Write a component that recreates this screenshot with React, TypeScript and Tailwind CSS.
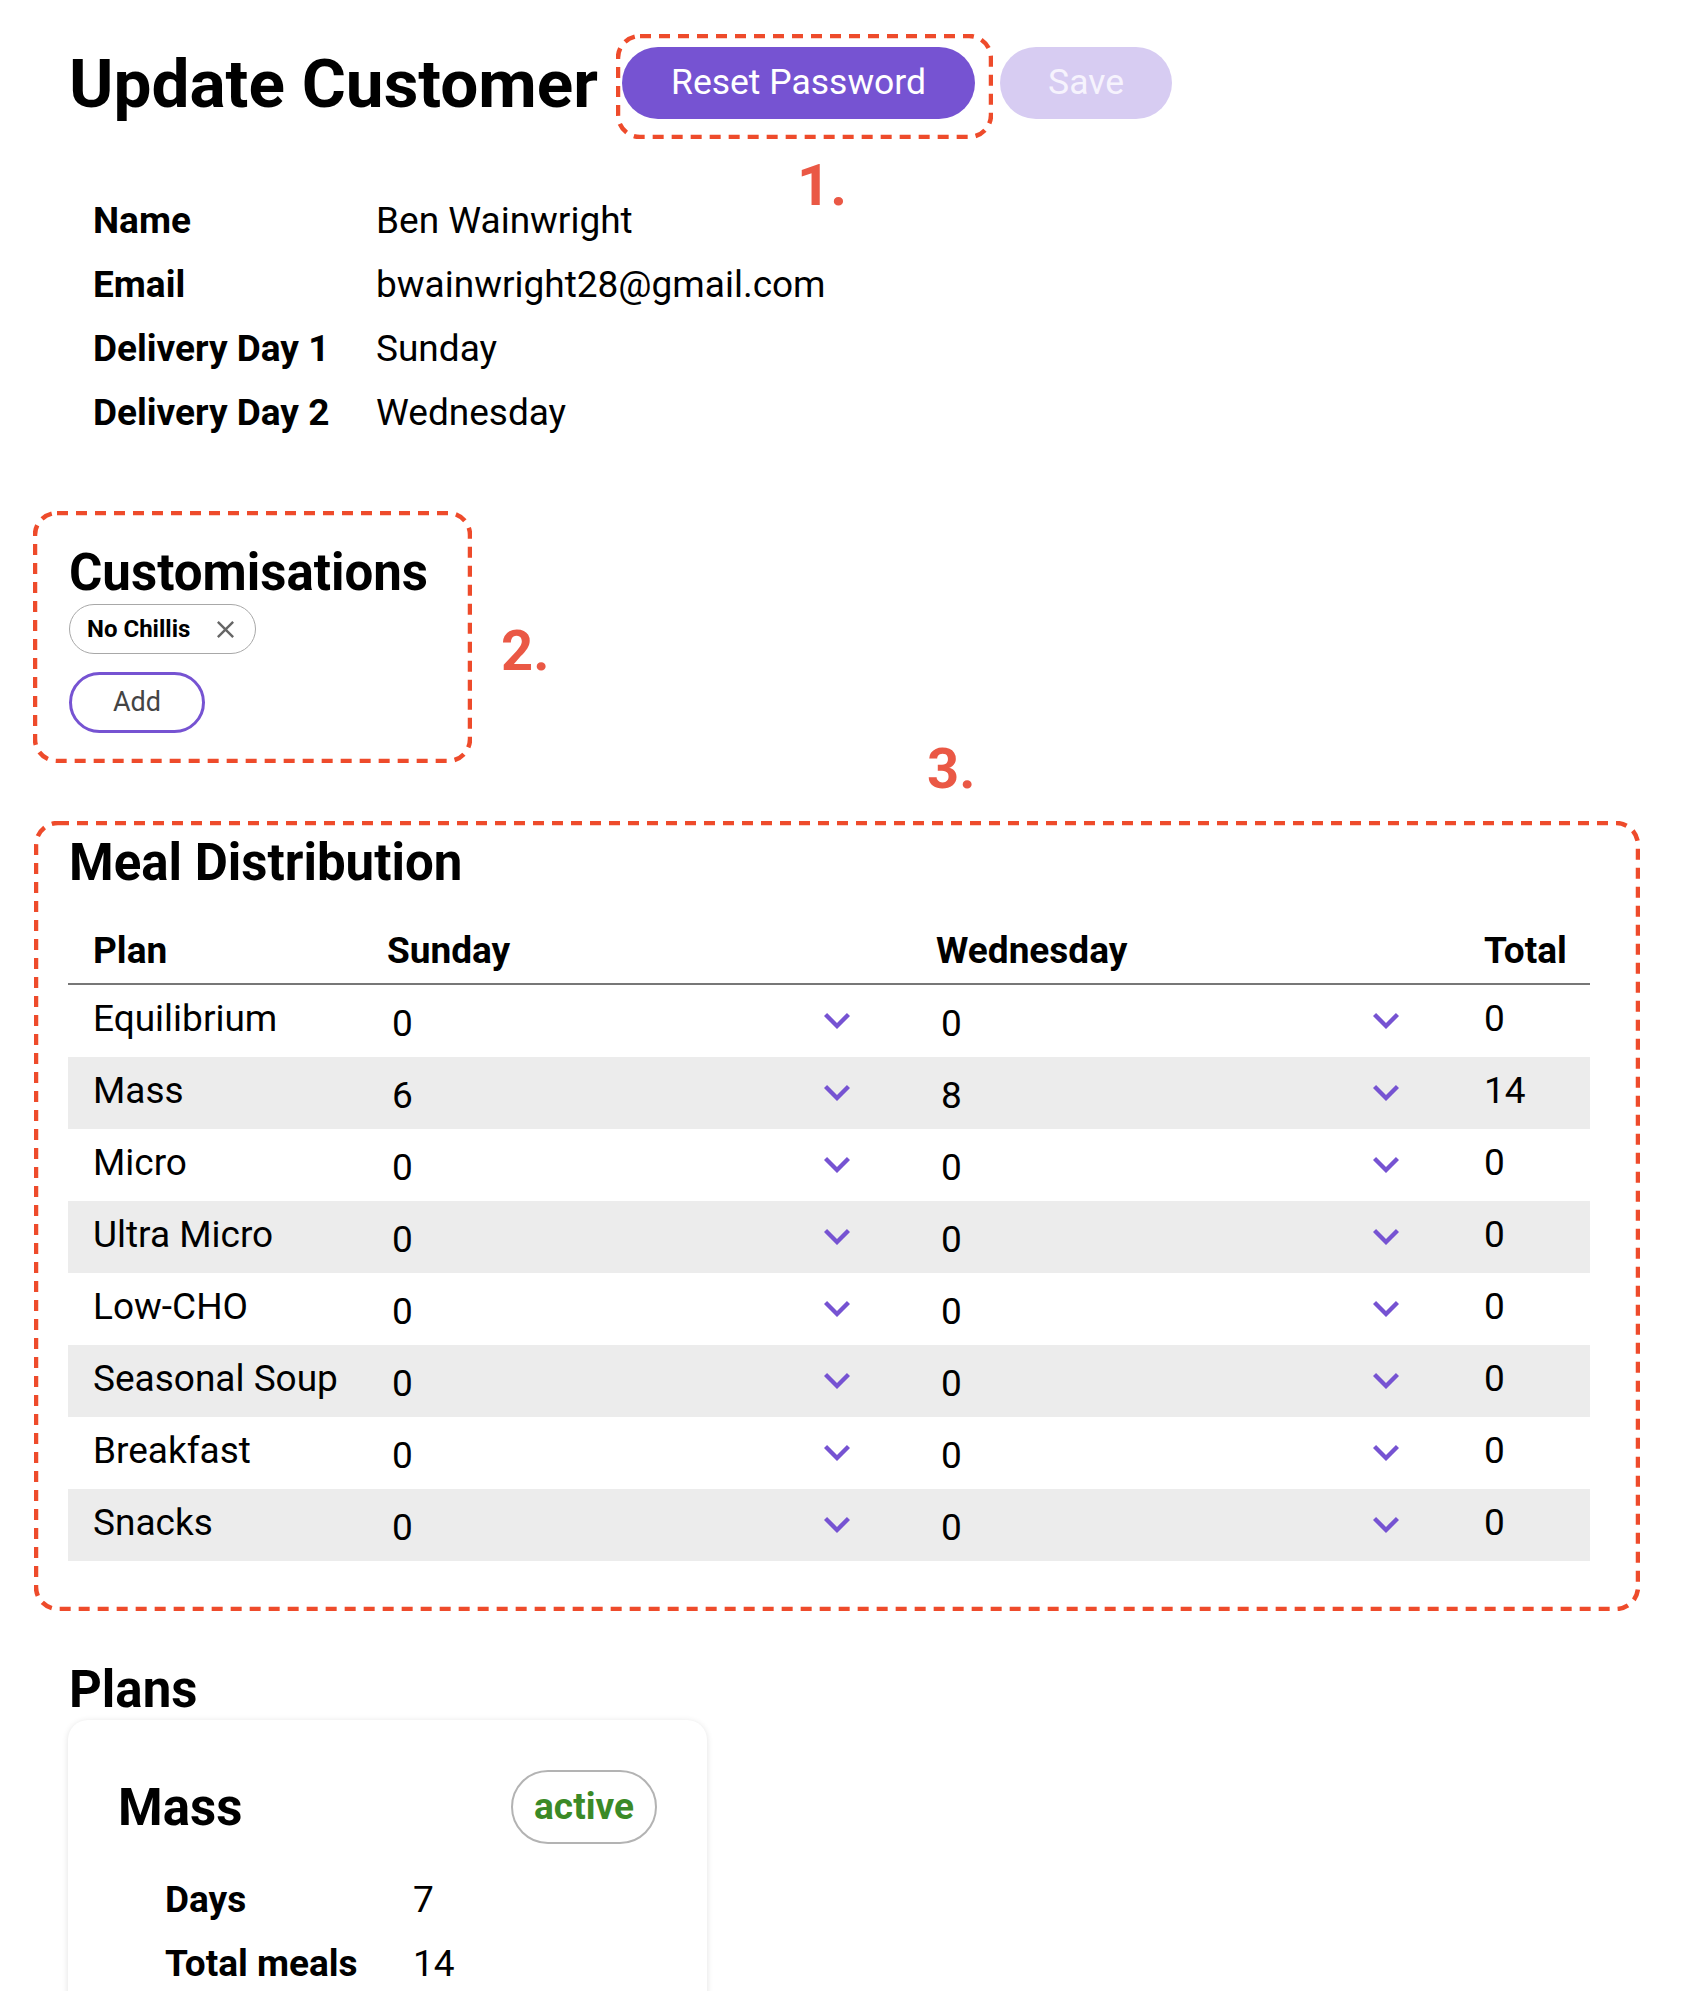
import React from "react";

const ROWS: [string, number, number][] = [
  ["Equilibrium", 0, 0],
  ["Mass", 6, 8],
  ["Micro", 0, 0],
  ["Ultra Micro", 0, 0],
  ["Low-CHO", 0, 0],
  ["Seasonal Soup", 0, 0],
  ["Breakfast", 0, 0],
  ["Snacks", 0, 0],
];

function ChevronDown() {
  return (
    <svg
      width="26"
      height="16"
      viewBox="6 8.59 12 7.41"
      preserveAspectRatio="none"
      fill="#7653d2"
    >
      <path d="M16.59 8.59L12 13.17 7.41 8.59 6 10l6 6 6-6z" />
    </svg>
  );
}

function CloseIcon() {
  return (
    <svg width="17" height="17" viewBox="5 5 14 14" fill="#666666">
      <path d="M19 6.41L17.59 5 12 10.59 6.41 5 5 6.41 10.59 12 5 17.59 6.41 19 12 13.41 17.59 19 19 17.59 13.41 12z" />
    </svg>
  );
}

// hand-drawn style annotation frame
function DashedFrame({ w, h }: { w: number; h: number }) {
  return (
    <svg width={w} height={h} className="block">
      <rect
        x="2"
        y="2"
        width={w - 4}
        height={h - 4}
        rx="22"
        fill="none"
        stroke="#ee4b2b"
        strokeWidth="4.5"
        strokeDasharray="11 8"
      />
    </svg>
  );
}

function SelectCell({ value }: { value: number }) {
  return (
    <div className="flex items-center pl-[30px]">
      <div className="flex w-[458px] items-center justify-between">
        <span className="pt-[6px]">{value}</span>
        <ChevronDown />
      </div>
    </div>
  );
}

export default function App() {
  return (
    <div className="min-h-screen bg-white font-['Roboto',sans-serif] text-black">
      <div className="pl-[69px] pt-[47px] pb-16">
        {/* Header */}
        <div className="flex items-start gap-[25px]">
          <h1 className="mt-[3px] text-[67.5px] font-bold leading-none">
            Update Customer
          </h1>
          <div className="relative -ml-px">
            <button className="h-[72px] rounded-full bg-[#7653d2] px-[49px] text-[35.5px] text-white">
              Reset Password
            </button>
            <div className="pointer-events-none absolute -left-[6px] -top-[13px]">
              <DashedFrame w={377} h={105} />
            </div>
            <span className="absolute left-[175px] top-[109px] text-[58px] font-bold leading-none text-[#ea5845]">
              1.
            </span>
          </div>
          <button className="h-[72px] rounded-full bg-[#d7ccf2] px-[48px] text-[35.5px] text-[#f6f3fd]">
            Save
          </button>
        </div>

        {/* Customer info */}
        <div className="ml-[24px] mt-[70px] grid grid-cols-[283px_auto] text-[37px] leading-[64px]">
          <span className="font-bold">Name</span>
          <span>Ben Wainwright</span>
          <span className="font-bold">Email</span>
          <span>bwainwright28@gmail.com</span>
          <span className="font-bold">Delivery Day 1</span>
          <span>Sunday</span>
          <span className="font-bold">Delivery Day 2</span>
          <span>Wednesday</span>
        </div>

        {/* Customisations */}
        <div className="relative mt-[102px]">
          <h2 className="text-[51px] font-bold leading-none">Customisations</h2>
          <div className="mt-[6px] inline-flex h-[50px] items-center gap-[27px] rounded-full border-[1.5px] border-[#a8a8a8] pl-[17px] pr-[21px]">
            <span className="text-[24px] font-bold">No Chillis</span>
            <CloseIcon />
          </div>
          <button className="mt-[18px] block h-[61px] w-[136px] rounded-full border-[3.5px] border-[#7653d2] text-[27px] text-[#444444]">
            Add
          </button>
          <div className="pointer-events-none absolute -left-[36px] -top-[36px]">
            <DashedFrame w={439} h={252} />
          </div>
          <span className="absolute left-[432px] top-[76px] text-[56px] font-bold leading-none text-[#ea5845]">
            2.
          </span>
        </div>

        {/* Meal Distribution */}
        <div className="relative mt-[104px]">
          <h2 className="text-[51px] font-bold leading-none">
            Meal Distribution
          </h2>
          <div className="-ml-px mt-[31px] w-[1522px] text-[37px]">
            <div className="grid h-[66px] grid-cols-[294px_549px_548px_1fr] items-center border-b-2 border-[#777777] font-bold">
              <span className="pl-[25px]">Plan</span>
              <span className="pl-[25px]">Sunday</span>
              <span className="pl-[25px]">Wednesday</span>
              <span className="pl-[25px]">Total</span>
            </div>
            {ROWS.map(([plan, sun, wed], i) => (
              <div
                key={plan}
                className={
                  "grid h-[72px] grid-cols-[294px_549px_548px_1fr] items-center " +
                  (i % 2 === 1 ? "bg-[#ececec]" : "bg-white")
                }
              >
                <span className="pl-[25px] pb-[4px]">{plan}</span>
                <SelectCell value={sun} />
                <SelectCell value={wed} />
                <span className="pl-[25px] pb-[4px]">{sun + wed}</span>
              </div>
            ))}
          </div>
          <div className="pointer-events-none absolute -left-[35px] -top-[16px]">
            <DashedFrame w={1606} h={790} />
          </div>
          <span className="absolute left-[858px] -top-[96px] text-[56px] font-bold leading-none text-[#ea5845]">
            3.
          </span>
        </div>

        {/* Plans */}
        <div className="mt-[103px]">
          <h2 className="text-[51px] font-bold leading-none">Plans</h2>
          <div className="-ml-px mt-[5px] w-[639px] rounded-[20px] bg-white p-[50px] shadow-[0_1px_6px_rgba(0,0,0,0.12)]">
            <div className="flex items-center justify-between">
              <h3 className="text-[51px] font-bold leading-none">Mass</h3>
              <span className="flex h-[74px] w-[146px] items-center justify-center rounded-full border-2 border-[#b3b3b3] text-[37px] font-bold text-[#3b8a27]">
                active
              </span>
            </div>
            <div className="ml-[47px] mt-[24px] grid grid-cols-[248px_auto] text-[37px] leading-[64px]">
              <span className="font-bold">Days</span>
              <span>7</span>
              <span className="font-bold">Total meals</span>
              <span>14</span>
            </div>
          </div>
        </div>
      </div>
    </div>
  );
}
